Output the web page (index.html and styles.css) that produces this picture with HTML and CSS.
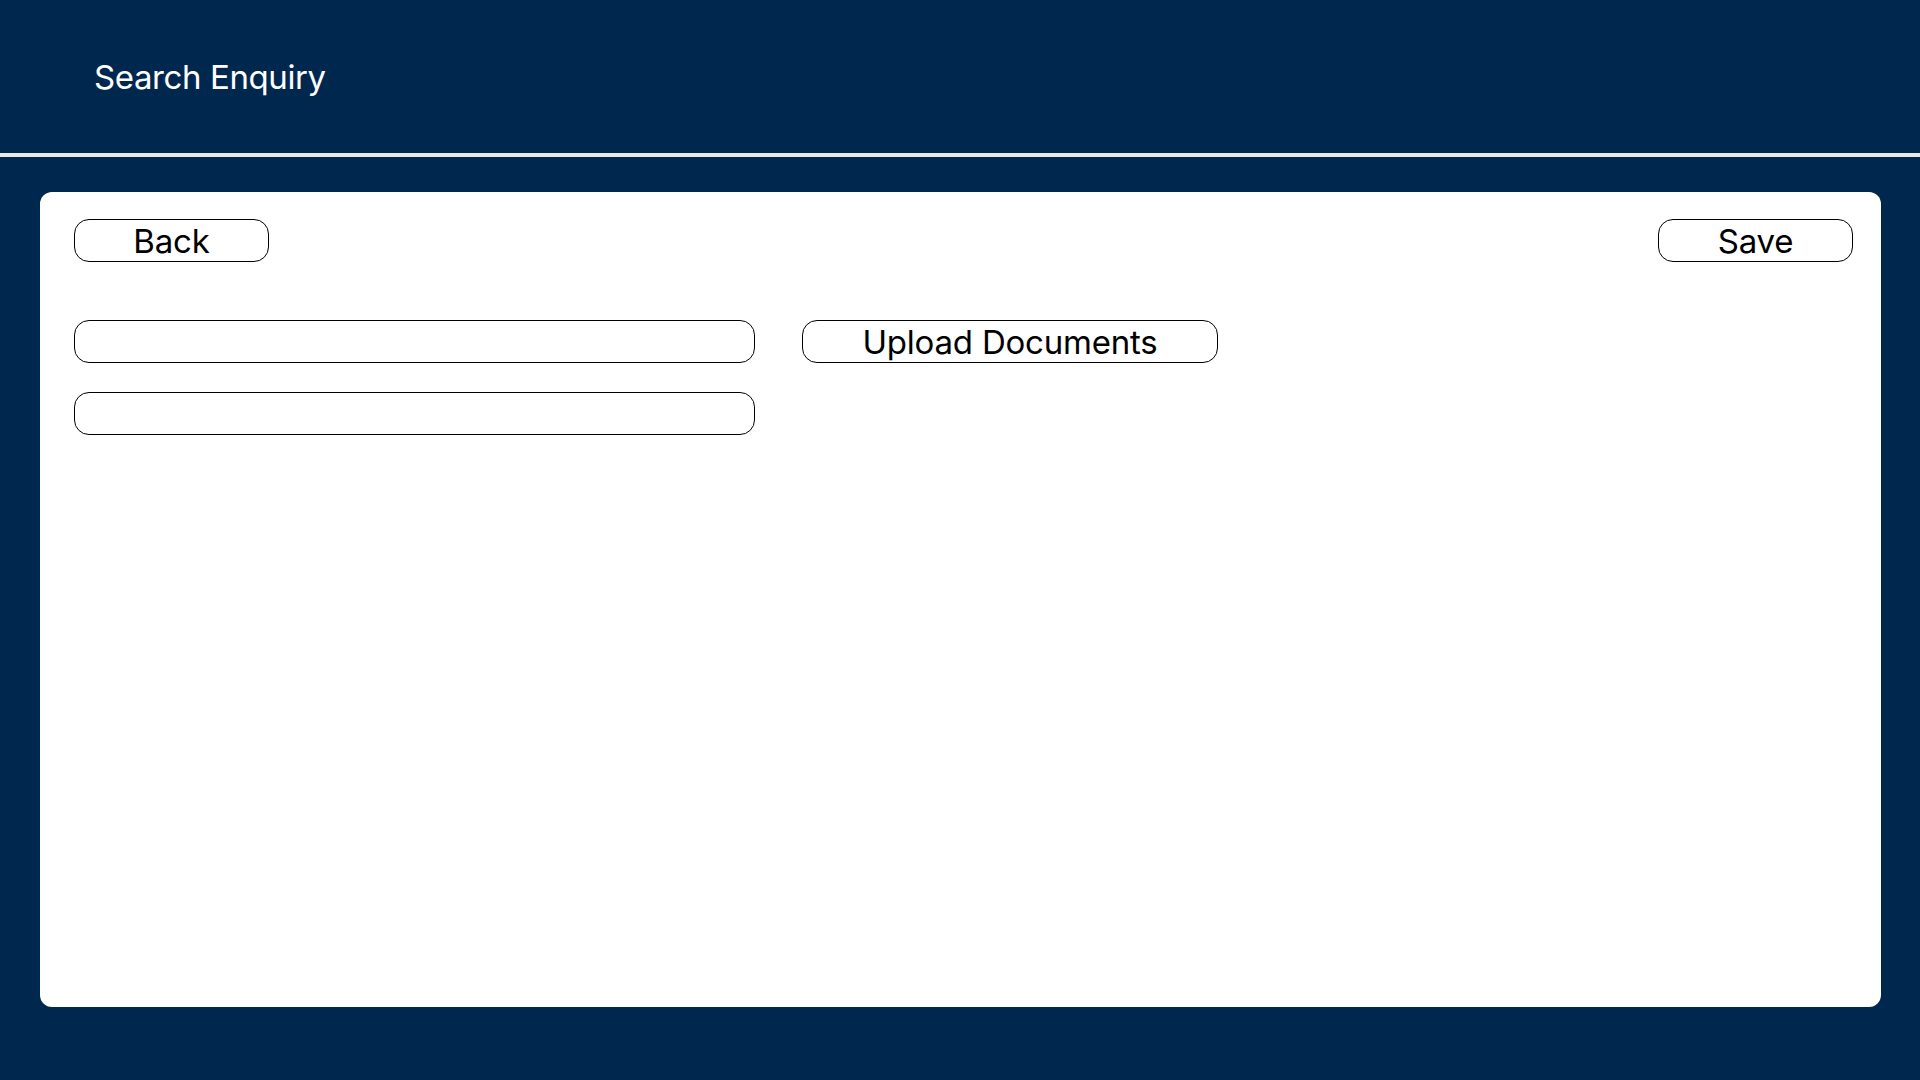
FILE: index.html
```html
<!DOCTYPE html>
<html lang="en">
<head>
<meta charset="utf-8">
<title>Search Enquiry</title>
<link rel="stylesheet" href="styles.css">
</head>
<body>
<header class="topbar">
  <h1 class="title">Search Enquiry</h1>
</header>
<div class="divider"></div>
<main class="main">
  <section class="card">
    <div class="actions">
      <button class="btn btn-small" type="button">Back</button>
      <button class="btn btn-small" type="button">Save</button>
    </div>
    <div class="form">
      <div class="form-row">
        <input class="field" type="text">
        <button class="btn btn-upload" type="button">Upload Documents</button>
      </div>
      <div class="form-row">
        <input class="field" type="text">
      </div>
    </div>
  </section>
</main>
</body>
</html>
```

FILE: styles.css
```css
* {
  box-sizing: border-box;
}

html, body {
  margin: 0;
  padding: 0;
}

body {
  width: 1920px;
  height: 1080px;
  background: #00284f;
  font-family: Inter, "Noto Sans", "Liberation Sans", sans-serif;
  overflow: hidden;
}

.topbar {
  height: 153px;
  padding-left: 94px;
  display: flex;
  align-items: flex-start;
}

.title {
  margin: 0;
  margin-top: 57px;
  font-size: 33px;
  font-weight: 400;
  color: #ffffff;
  line-height: 40px;
  letter-spacing: -0.4px;
}

.divider {
  height: 4px;
  background: #e8e8e8;
}

.main {
  padding: 35px 39px 0 40px;
}

.card {
  height: 815px;
  background: #ffffff;
  border-radius: 12px;
  padding: 27px 28px 0 34px;
}

.actions {
  display: flex;
  justify-content: space-between;
}

.btn {
  height: 43px;
  background: #ffffff;
  border: 1px solid #000000;
  border-radius: 15px;
  font-family: inherit;
  font-size: 33px;
  font-weight: 400;
  color: #000000;
  padding: 2px 0 0 0;
  line-height: 39px;
  letter-spacing: -0.2px;
}

.btn-small {
  width: 195px;
}

.btn-upload {
  width: 416px;
}

.form {
  margin-top: 58px;
  display: flex;
  flex-direction: column;
  gap: 29px;
}

.form-row {
  display: flex;
  gap: 47px;
}

.field {
  width: 681px;
  height: 43px;
  border: 1px solid #000000;
  border-radius: 15px;
  background: #ffffff;
  outline: none;
  padding: 0 14px;
  font-family: inherit;
  font-size: 20px;
}
```
